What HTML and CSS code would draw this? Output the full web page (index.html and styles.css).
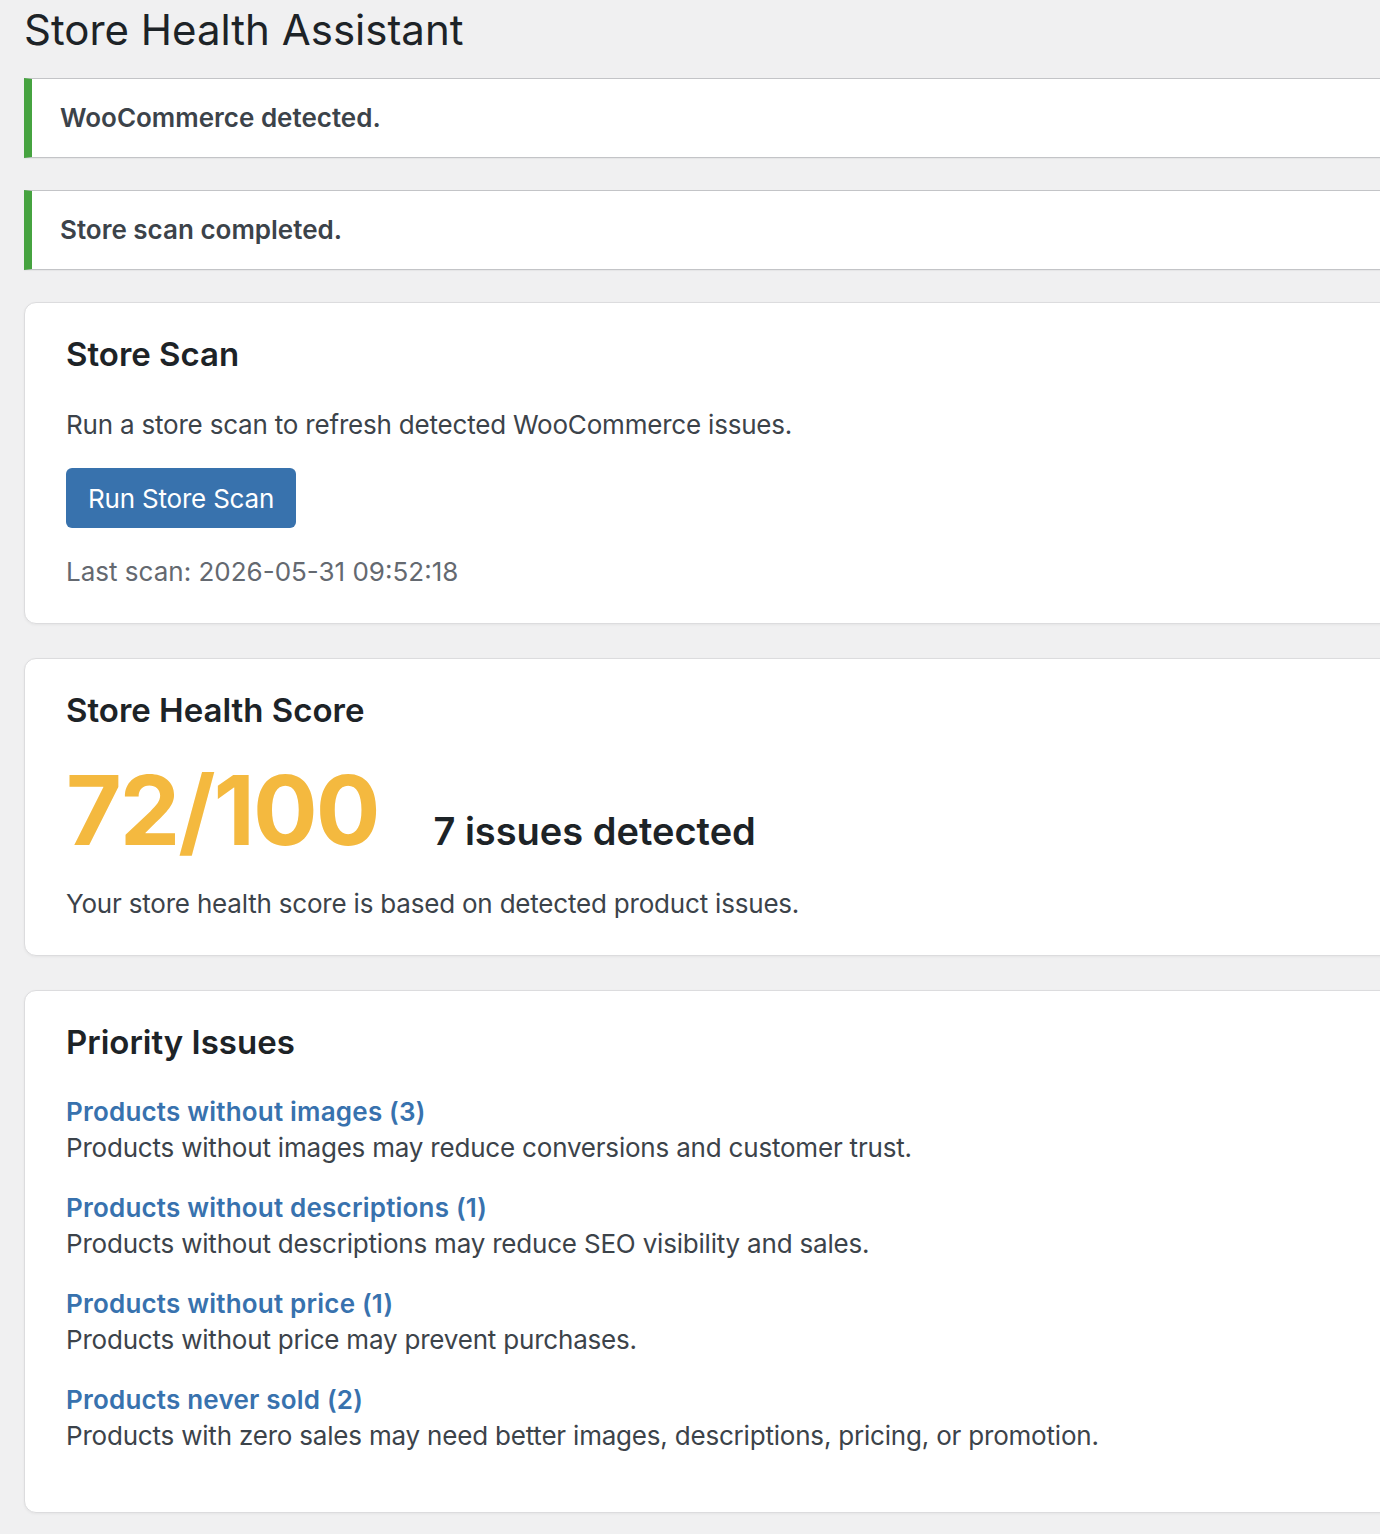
FILE: index.html
```html
<!DOCTYPE html>
<html lang="en">
<head>
    <meta charset="UTF-8">
    <meta name="viewport" content="width=device-width, initial-scale=1.0">
    <title>Store Health Assistant</title>
    <link rel="stylesheet" href="styles.css">
</head>
<body>

<div class="wrap">
    <h1 class="page-title">Store Health Assistant</h1>

    <!-- Avisos -->
    <div class="notice notice-success">
        <p><strong>WooCommerce detected.</strong></p>
    </div>
    <div class="notice notice-success">
        <p><strong>Store scan completed.</strong></p>
    </div>

    <!-- Escaneo -->
    <div class="card">
        <h2>Store Scan</h2>
        <p>Run a store scan to refresh detected WooCommerce issues.</p>
        <button type="button" class="scan-btn">Run Store Scan</button>
        <p class="last-scan">Last scan: 2026-05-31 09:52:18</p>
    </div>

    <!-- Puntuación -->
    <div class="card">
        <h2>Store Health Score</h2>
        <div class="score-row">
            <span class="score">72/100</span>
            <span class="issues-count">7 issues detected</span>
        </div>
        <p>Your store health score is based on detected product issues.</p>
    </div>

    <!-- Problemas prioritarios -->
    <div class="card">
        <h2>Priority Issues</h2>
        <ul class="issue-list">
            <li>
                <a href="#">Products without images (3)</a>
                <span>Products without images may reduce conversions and customer trust.</span>
            </li>
            <li>
                <a href="#">Products without descriptions (1)</a>
                <span>Products without descriptions may reduce SEO visibility and sales.</span>
            </li>
            <li>
                <a href="#">Products without price (1)</a>
                <span>Products without price may prevent purchases.</span>
            </li>
            <li>
                <a href="#">Products never sold (2)</a>
                <span>Products with zero sales may need better images, descriptions, pricing, or promotion.</span>
            </li>
        </ul>
    </div>
</div>

</body>
</html>
```

FILE: styles.css
```css
* {
    margin: 0;
    padding: 0;
    box-sizing: border-box;
}

html, body {
    overflow-x: hidden;
}

body {
    font-family: Inter, "Noto Sans", sans-serif;
    background-color: #f0f0f1;
    color: #3c434a;
    font-size: 26px;
    line-height: 1.5;
    letter-spacing: -0.2px;
}

.wrap {
    padding-left: 24px;
    margin-right: -80px;
}

.page-title {
    font-size: 42px;
    font-weight: 400;
    line-height: 60px;
    color: #1d2327;
    margin-bottom: 18px;
    letter-spacing: 0;
}

/* Avisos */
.notice {
    background: #fff;
    border: 1px solid #c3c4c7;
    border-left: 8px solid #46a340;
    box-shadow: 0 1px 1px rgba(0, 0, 0, 0.04);
    padding: 0 28px;
    margin-bottom: 32px;
}

.notice p {
    line-height: 78px;
    letter-spacing: 0;
}

.notice strong {
    font-weight: 600;
}

/* Tarjetas */
.card {
    background: #fff;
    border: 1px solid #dcdcde;
    border-radius: 12px;
    box-shadow: 0 1px 3px rgba(0, 0, 0, 0.05);
    padding: 31px 41px 32px;
    margin-bottom: 34px;
}

.notice + .card {
    margin-top: 2px;
}

.card h2 {
    font-size: 33px;
    font-weight: 600;
    line-height: 40px;
    color: #1d2327;
    letter-spacing: 0;
}

.card h2 + p {
    margin-top: 31px;
}

.scan-btn {
    display: block;
    margin-top: 24px;
    height: 60px;
    padding: 0 22px;
    background-color: #3872ad;
    color: #fff;
    border: none;
    border-radius: 6px;
    font-family: inherit;
    font-size: 26px;
    letter-spacing: -0.2px;
    cursor: pointer;
}

.scan-btn:hover {
    background-color: #2c5f94;
}

.last-scan {
    margin-top: 24px;
    color: #646970;
    letter-spacing: 0;
}

.score-row {
    display: flex;
    align-items: baseline;
    gap: 55px;
    margin-top: 32px;
}

.score {
    font-size: 96px;
    font-weight: 700;
    line-height: 1;
    color: #f4b93f;
    letter-spacing: -2px;
}

.issues-count {
    font-size: 38px;
    font-weight: 600;
    color: #1d2327;
    letter-spacing: 0;
}

.score-row + p {
    margin-top: 24px;
}

.issue-list {
    list-style: none;
    margin-top: 32px;
    margin-bottom: 26px;
}

.issue-list li {
    line-height: 36px;
    margin-bottom: 24px;
}

.issue-list li:last-child {
    margin-bottom: 0;
}

.issue-list a {
    display: block;
    color: #3872ae;
    font-weight: 600;
    letter-spacing: 0.2px;
    text-decoration: none;
}

.issue-list a:hover {
    text-decoration: underline;
}

.issue-list span {
    display: block;
}
```
